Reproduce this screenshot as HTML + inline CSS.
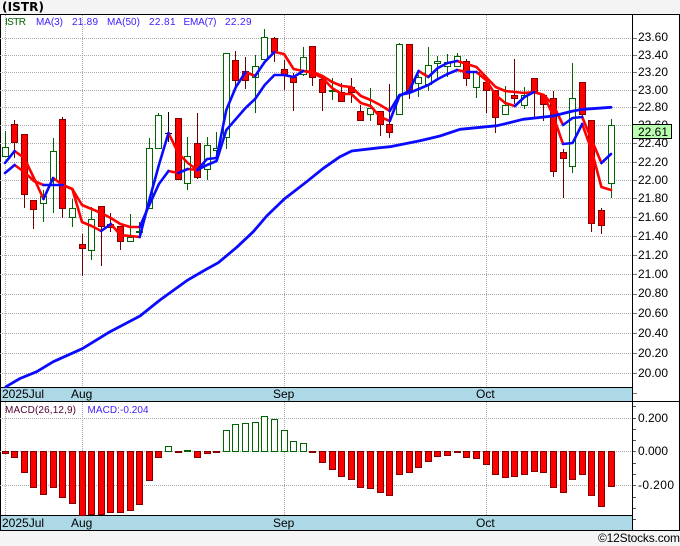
<!DOCTYPE html>
<html><head><meta charset="utf-8"><style>
html,body{margin:0;padding:0;background:#f4f4f4;width:680px;height:546px;overflow:hidden}
svg{display:block;position:absolute;left:0;top:0}
text{font-family:"Liberation Sans",Arial,sans-serif;font-size:12px;fill:#000}
.l{font-size:10px;fill:#3a1cff}
</style></head><body>
<svg width="680" height="546" viewBox="0 0 680 546" xmlns="http://www.w3.org/2000/svg">
<rect x="0" y="14" width="680" height="516" fill="#fff"/>
<rect x="0" y="387" width="632" height="14" fill="#add8e6"/>
<rect x="0" y="515" width="632" height="15" fill="#add8e6"/>
<g shape-rendering="crispEdges">
<path d="M0 14.5H680M0 387.5H632M0 401.5H680M0 515.5H632M0 530.5H680M632.5 14V530M679.5 14V530M.5 14V530" stroke="#000" fill="none"/>
<path d="M0 38.5H632M0 55.5H632M0 72.5H632M0 90.5H632M0 107.5H632M0 125.5H632M0 143.5H632M0 162.5H632M0 180.5H632M0 198.5H632M0 217.5H632M0 236.5H632M0 255.5H632M0 274.5H632M0 294.5H632M0 313.5H632M0 333.5H632M0 353.5H632M0 373.5H632M0 418.5H632M0 451.5H632M0 485.5H632M5.5 15V387M82.5 15V387M284.5 15V387M486.5 15V387M5.5 402V515M82.5 402V515M284.5 402V515M486.5 402V515" stroke="#aaa" stroke-dasharray="1 1" fill="none"/>
<path d="M633 38.5h4M633 55.5h4M633 72.5h4M633 90.5h4M633 107.5h4M633 143.5h4M633 162.5h4M633 180.5h4M633 198.5h4M633 217.5h4M633 236.5h4M633 255.5h4M633 274.5h4M633 294.5h4M633 313.5h4M633 333.5h4M633 353.5h4M633 373.5h4M633 393.5h4" stroke="#777" fill="none"/>
<path d="M633 406.5h3M633 418.5h3M633 429.5h3M633 440.5h3M633 451.5h3M633 463.5h3M633 474.5h3M633 485.5h3M633 497.5h3M633 508.5h3M633 519.5h3" stroke="#555" fill="none"/>

<!-- wicks -->
<path d="M14.5 120V158M24.5 134V208M33.5 200V229M62.5 117V218M82.5 234V276M101.5 206V266M110.5 213V232M120.5 226V250M178.5 118V180M197.5 113V179M235.5 51V89M245.5 57V89M274.5 37V62M284.5 60V90M293.5 73V111M312.5 46V86M322.5 79V111M341.5 83V102M351.5 78V103M360.5 105V121M380.5 111V136M389.5 84V138M409.5 44V99M466.5 59V86M486.5 81V113M495.5 90V133M514.5 59V104M534.5 78V117M543.5 94V121M553.5 91V177M563.5 149V198M582.5 82V116M591.5 120V232M601.5 208V234" stroke="#6a0000" fill="none"/>
<path d="M5.5 131V157M43.5 190V222M53.5 138V213M72.5 199V227M91.5 207V260M130.5 214V241M139.5 222V237M149.5 138V208M158.5 113V149M187.5 137V190M207.5 137V180M216.5 132V160M226.5 53V149M255.5 55V113M264.5 29V59M303.5 47V76M332.5 78V100M370.5 88V121M399.5 43V114M418.5 75V97M428.5 47V91M437.5 56V78M447.5 54V77M457.5 53V66M476.5 72V98M505.5 86V114M524.5 87V109M572.5 63V173M611.5 119V198" stroke="#006400" fill="none"/>
<path d="M168.5 112V142M165 133.5h7" stroke="#000" fill="none"/>
<!-- bodies -->
<path d="M2.5 147.5h6V156.5h-6zM40.5 196.5h6V203.5h-6zM50.5 151.5h6V180.5h-6zM69.5 208.5h6V217.5h-6zM88.5 219.5h6V250.5h-6zM127.5 237.5h6V241.5h-6zM136.5 231.5h6V232.5h-6zM146.5 148.5h6V208.5h-6zM155.5 115.5h6V148.5h-6zM184.5 156.5h6V183.5h-6zM204.5 145.5h6V169.5h-6zM213.5 148.5h6V150.5h-6zM223.5 53.5h6V137.5h-6zM252.5 66.5h6V77.5h-6zM261.5 37.5h6V59.5h-6zM300.5 57.5h6V74.5h-6zM329.5 90.5h6V91.5h-6zM367.5 108.5h6V114.5h-6zM396.5 44.5h6V114.5h-6zM415.5 77.5h6V83.5h-6zM425.5 65.5h6V84.5h-6zM434.5 61.5h6V63.5h-6zM444.5 62.5h6V66.5h-6zM454.5 56.5h6V66.5h-6zM473.5 72.5h6V87.5h-6zM502.5 105.5h6V114.5h-6zM521.5 95.5h6V105.5h-6zM569.5 98.5h6V166.5h-6zM608.5 125.5h6V183.5h-6z" fill="#fff" stroke="#006400"/>
<path d="M11.5 124.5h6V142.5h-6zM21.5 134.5h6V194.5h-6zM30.5 200.5h6V209.5h-6zM59.5 119.5h6V208.5h-6zM79.5 244.5h6V248.5h-6zM98.5 206.5h6V226.5h-6zM107.5 224.5h6V227.5h-6zM117.5 226.5h6V241.5h-6zM175.5 118.5h6V179.5h-6zM194.5 143.5h6V177.5h-6zM232.5 60.5h6V80.5h-6zM242.5 71.5h6V80.5h-6zM271.5 38.5h6V52.5h-6zM281.5 69.5h6V74.5h-6zM290.5 77.5h6V82.5h-6zM309.5 46.5h6V77.5h-6zM319.5 79.5h6V92.5h-6zM338.5 92.5h6V101.5h-6zM348.5 87.5h6V92.5h-6zM357.5 111.5h6V120.5h-6zM377.5 111.5h6V124.5h-6zM386.5 124.5h6V132.5h-6zM406.5 44.5h6V90.5h-6zM463.5 61.5h6V78.5h-6zM483.5 82.5h6V90.5h-6zM492.5 90.5h6V117.5h-6zM511.5 95.5h6V98.5h-6zM531.5 78.5h6V92.5h-6zM540.5 95.5h6V104.5h-6zM550.5 98.5h6V171.5h-6zM560.5 152.5h6V158.5h-6zM579.5 82.5h6V114.5h-6zM588.5 120.5h6V223.5h-6zM598.5 210.5h6V225.5h-6z" fill="#f00" stroke="#800000"/>
<!-- MACD -->
<path d="M2.5 451.5h6V453.5h-6zM11.5 451.5h6V457.5h-6zM21.5 451.5h6V472.5h-6zM30.5 451.5h6V487.5h-6zM40.5 451.5h6V494.5h-6zM50.5 451.5h6V487.5h-6zM59.5 451.5h6V497.5h-6zM69.5 451.5h6V503.5h-6zM79.5 451.5h6V515.5h-6zM88.5 451.5h6V514.5h-6zM98.5 451.5h6V514.5h-6zM107.5 451.5h6V512.5h-6zM117.5 451.5h6V512.5h-6zM127.5 451.5h6V510.5h-6zM136.5 451.5h6V504.5h-6zM146.5 451.5h6V480.5h-6zM155.5 451.5h6V457.5h-6zM175.5 451.5h6V452.5h-6zM194.5 451.5h6V457.5h-6zM204.5 451.5h6V453.5h-6zM213.5 451.5h6V452.5h-6zM309.5 451.5h6V452.5h-6zM319.5 451.5h6V462.5h-6zM329.5 451.5h6V469.5h-6zM338.5 451.5h6V476.5h-6zM348.5 451.5h6V479.5h-6zM357.5 451.5h6V487.5h-6zM367.5 451.5h6V488.5h-6zM377.5 451.5h6V492.5h-6zM386.5 451.5h6V495.5h-6zM396.5 451.5h6V474.5h-6zM406.5 451.5h6V472.5h-6zM415.5 451.5h6V467.5h-6zM425.5 451.5h6V461.5h-6zM434.5 451.5h6V456.5h-6zM444.5 451.5h6V455.5h-6zM454.5 451.5h6V452.5h-6zM463.5 451.5h6V457.5h-6zM473.5 451.5h6V458.5h-6zM483.5 451.5h6V464.5h-6zM492.5 451.5h6V474.5h-6zM502.5 451.5h6V477.5h-6zM511.5 451.5h6V476.5h-6zM521.5 451.5h6V474.5h-6zM531.5 451.5h6V471.5h-6zM540.5 451.5h6V472.5h-6zM550.5 451.5h6V487.5h-6zM560.5 451.5h6V492.5h-6zM569.5 451.5h6V479.5h-6zM579.5 451.5h6V474.5h-6zM588.5 451.5h6V495.5h-6zM598.5 451.5h6V506.5h-6zM608.5 451.5h6V486.5h-6z" fill="#f00" stroke="#800000"/>
<path d="M165.5 446.5h6V451.5h-6zM184.5 450.5h6V451.5h-6zM223.5 430.5h6V451.5h-6zM232.5 424.5h6V451.5h-6zM242.5 423.5h6V451.5h-6zM252.5 422.5h6V451.5h-6zM261.5 416.5h6V451.5h-6zM271.5 419.5h6V451.5h-6zM281.5 430.5h6V451.5h-6zM290.5 441.5h6V451.5h-6zM300.5 443.5h6V451.5h-6z" fill="#fff" stroke="#006400"/>
</g>

<!-- moving averages -->
<g fill="none" stroke-width="2.6" stroke-linejoin="round" stroke-linecap="round">
<path stroke="#f00" d="M14.6 151L24.2 158 33.9 178 43.5 199M53.1 178L62.7 185 72.3 189 82 222 91.6 226 101.2 231M110.8 224L120.4 235 130.1 236 139.7 237M168.5 133L178.2 153 187.8 163 197.4 170M245.5 72L255.1 76M274.4 52L284 54 293.6 69 303.2 71 312.8 73 322.5 78 332.1 88 341.7 94 351.3 94 360.9 103 370.6 106 380.2 117 389.8 121M418.7 71L428.3 77M457.1 61L466.8 64 476.4 67 486 77 495.6 87 505.2 91 514.9 92 524.5 93 534.1 92 543.7 95 553.3 105 563 125M582.2 117L591.8 140 601.4 163"/>
<path stroke="#f00" d="M14.6 165L24.2 172 33.9 181 43.5 185M62.7 185L72.3 189 82 205 91.6 209 101.2 213 110.8 218 120.4 224 130.1 227 139.7 227M168.5 171L178.2 173M187.8 169L197.4 170M303.2 71L312.8 72 322.5 76 332.1 82 341.7 86 351.3 87 360.9 96 370.6 100 380.2 105 389.8 111M457.1 70L466.8 72M476.4 72L486 80 495.6 95 505.2 103 514.9 106M534.1 92L543.7 95 553.3 116 563 144M582.2 124L591.8 151 601.4 187 611 190"/>
<path stroke="#0a0aff" d="M5 163L14.6 151M43.5 199L53.1 178M101.2 231L110.8 224M139.7 237L149.3 200 158.9 165 168.5 133M197.4 170L207 159 216.6 158 226.3 110 235.9 87 245.5 72M255.1 76L264.7 62 274.4 52M389.8 121L399.4 96 409 91 418.7 71M428.3 77L437.9 68 447.5 63 457.1 61M563 125L572.6 118 582.2 117M601.4 163L611 154"/>
<path stroke="#0a0aff" d="M5 173L14.6 165M43.5 185L53.1 185 62.7 185M139.7 227L149.3 205 158.9 184 168.5 171M178.2 173L187.8 169M197.4 170L207 165 216.6 161 226.3 130 235.9 119 245.5 108 255.1 99 264.7 85 274.4 75 284 75 293.6 77 303.2 71M389.8 111L399.4 95 409 93 418.7 89 428.3 85 437.9 79 447.5 74 457.1 70M466.8 72L476.4 72M514.9 106L524.5 97 534.1 92M563 144L572.6 143 582.2 124"/>
<path stroke="#0a0aff" stroke-width="2.8" d="M6 386.7L20 378.5 36.7 371.7 53.3 361.7 82.3 348.7 110 331.7 140 316 160 300 186.7 280.7 205 270 218.3 262.7 236.7 247.3 253.3 231.7 266.7 216 284.3 199 306.7 181.7 323.3 168.3 340 156.7 351.7 151 380 147.7 390 146.7 420 140.7 440 136 460 129.3 497 125.7 507 123.3 523 119.3 553 116 573 111 583 109.3 611 107.3"/>
</g>

<text x="2" y="11" style="font-family:'DejaVu Sans',sans-serif;font-weight:bold;font-size:12px" textLength="42">(ISTR)</text>
<text x="5" y="25" class="l" style="fill:#006400" textLength="21">ISTR</text>
<text x="36" y="25" class="l" textLength="27">MA(3)</text>
<text x="72" y="25" class="l" textLength="26">21.89</text>
<text x="107" y="25" class="l" textLength="33">MA(50)</text>
<text x="149" y="25" class="l" textLength="26.5">22.81</text>
<text x="183.5" y="25" class="l" textLength="33">EMA(7)</text>
<text x="225" y="25" class="l" textLength="26.5">22.29</text>
<text x="5" y="413" class="l" style="fill:#500030" textLength="71">MACD(26,12,9)</text>
<text x="87.5" y="413" class="l" textLength="61">MACD:-0.204</text>

<text x="638" y="41">23.60</text><text x="638" y="59">23.40</text><text x="638" y="76">23.20</text><text x="638" y="94">23.00</text><text x="638" y="111">22.80</text><text x="638" y="129">22.60</text><text x="638" y="147">22.40</text><text x="638" y="166">22.20</text><text x="638" y="184">22.00</text><text x="638" y="202">21.80</text><text x="638" y="221">21.60</text><text x="638" y="240">21.40</text><text x="638" y="259">21.20</text><text x="638" y="278">21.00</text><text x="638" y="297">20.80</text><text x="638" y="317">20.60</text><text x="638" y="337">20.40</text><text x="638" y="357">20.20</text><text x="638" y="377">20.00</text>
<rect x="632.5" y="124.5" width="39" height="14" fill="#b8ffb0" stroke="#000" shape-rendering="crispEdges"/>
<text x="638" y="136">22.61</text>
<text x="638" y="422">0.200</text><text x="638" y="455">0.000</text><text x="638" y="489" textLength="36">-0.200</text>

<text x="2" y="398">2025Jul</text><text x="71" y="398">Aug</text><text x="273" y="398">Sep</text><text x="476" y="398">Oct</text>
<text x="2" y="527">2025Jul</text><text x="71" y="527">Aug</text><text x="273" y="527">Sep</text><text x="476" y="527">Oct</text>
<text x="598" y="542" textLength="82">©12Stocks.com</text>
</svg>
</body></html>
